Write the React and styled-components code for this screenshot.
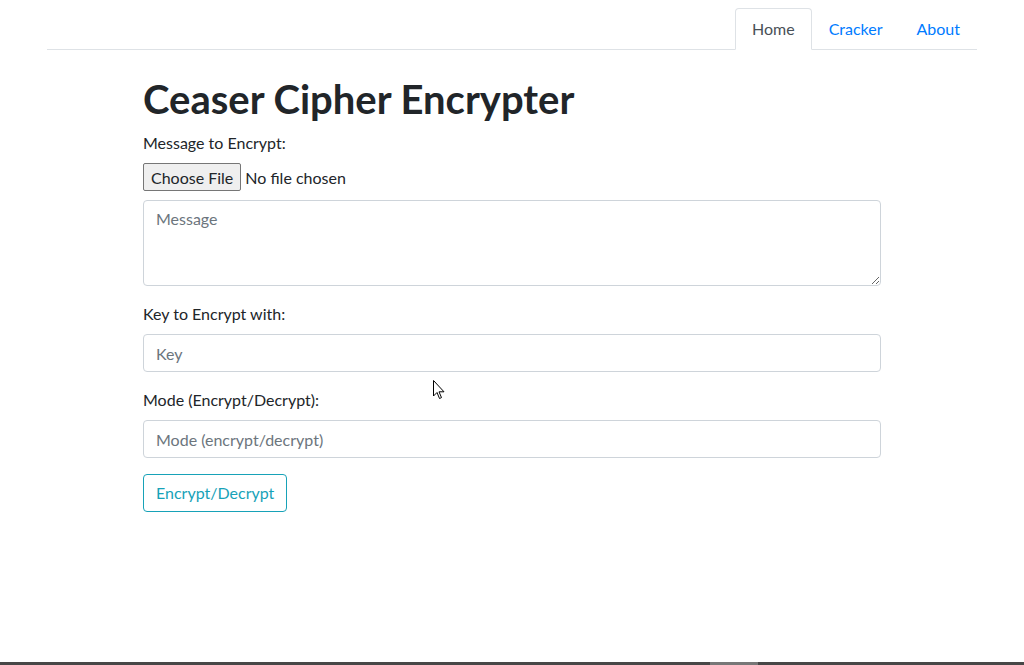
import { createGlobalStyle, styled } from 'styled-components'

const GlobalStyle = createGlobalStyle`
  html, body {
    margin: 0;
    padding: 0;
    background: #fff;
  }
  body {
    font-family: Lato, "Noto Sans", sans-serif;
    font-size: 16px;
    line-height: 1.5;
    color: #212529;
  }
  *, *::before, *::after {
    box-sizing: border-box;
  }
`

const Container = styled.div`
  width: 960px;
  margin: 0 auto;
  padding: 8px 15px 0;
`

const Tabs = styled.ul`
  display: flex;
  justify-content: flex-end;
  list-style: none;
  margin: 0;
  padding: 0;
  border-bottom: 1px solid #dee2e6;
`

const Tab = styled.li`
  margin-bottom: -1px;
`

const TabLink = styled.a`
  display: block;
  padding: 8px 16px;
  line-height: 24px;
  border: 1px solid ${(p) => (p.$active ? '#dee2e6' : 'transparent')};
  border-bottom-color: ${(p) => (p.$active ? '#fff' : 'transparent')};
  border-top-left-radius: 4px;
  border-top-right-radius: 4px;
  background: ${(p) => (p.$active ? '#fff' : 'transparent')};
  color: ${(p) => (p.$active ? '#495057' : '#007bff')};
  text-decoration: none;
`

const Main = styled.main`
  width: 768px;
  margin: 0 auto;
  padding: 25px 15px 0;
`

const Title = styled.h1`
  margin: 0 0 8px;
  font-size: 40px;
  font-weight: 700;
  line-height: 1.2;
`

const Group = styled.div`
  margin-bottom: 16px;
`

const Label = styled.label`
  display: block;
  margin-bottom: 8px;
`

const FileInput = styled.input`
  display: block;
  width: 100%;
  margin-bottom: 9px;
  font-family: inherit;
  font-size: 16px;
  color: #212529;
  &::file-selector-button {
    height: 28px;
    padding: 0 7px;
    margin-right: 4px;
    font-family: inherit;
    font-size: 16px;
    color: #212529;
    background: #efefef;
    border: 1px solid #767676;
    border-radius: 2px;
  }
`

const Field = styled.input`
  display: block;
  width: 100%;
  height: 38px;
  padding: 6px 12px;
  font-family: inherit;
  font-size: 16px;
  line-height: 24px;
  color: #495057;
  border: 1px solid #ced4da;
  border-radius: 4px;
  &::placeholder {
    color: #6c757d;
  }
`

const TextArea = styled.textarea`
  display: block;
  width: 100%;
  height: 86px;
  padding: 6px 12px;
  font-family: inherit;
  font-size: 16px;
  line-height: 24px;
  color: #495057;
  border: 1px solid #ced4da;
  border-radius: 4px;
  &::placeholder {
    color: #6c757d;
  }
`

const Button = styled.button`
  height: 38px;
  padding: 6px 12px;
  font-family: inherit;
  font-size: 16px;
  line-height: 24px;
  color: #17a2b8;
  background: transparent;
  border: 1px solid #17a2b8;
  border-radius: 4px;
`

const Pointer = styled.svg`
  position: absolute;
  left: 433px;
  top: 380px;
`

const BottomBar = styled.div`
  position: fixed;
  left: 0;
  right: 0;
  bottom: 0;
  height: 3px;
  background: #474747;
`

const BarThumb = styled.div`
  width: 48px;
  height: 3px;
  margin-left: 710px;
  background: #777;
`

const App = () => {
  return (
    <>
      <GlobalStyle />
      <Container>
        <Tabs>
          <Tab>
            <TabLink $active href="#">Home</TabLink>
          </Tab>
          <Tab>
            <TabLink href="#">Cracker</TabLink>
          </Tab>
          <Tab>
            <TabLink href="#">About</TabLink>
          </Tab>
        </Tabs>
      </Container>
      <Main>
        <Title>Ceaser Cipher Encrypter</Title>
        <Group>
          <Label>Message to Encrypt:</Label>
          <FileInput type="file" />
          <TextArea placeholder="Message" rows={3} />
        </Group>
        <Group>
          <Label>Key to Encrypt with:</Label>
          <Field placeholder="Key" />
        </Group>
        <Group>
          <Label>Mode (Encrypt/Decrypt):</Label>
          <Field placeholder="Mode (encrypt/decrypt)" />
        </Group>
        <Button>Encrypt/Decrypt</Button>
      </Main>
      <Pointer width="12" height="20" viewBox="0 0 12 20">
        <path d="M0.5 0.5 L0.5 16 L4 12.5 L6.5 18.5 L8.5 17.6 L6 11.8 L11 11.8 Z" fill="#fff" stroke="#000" strokeWidth="1" />
      </Pointer>
      <BottomBar>
        <BarThumb />
      </BottomBar>
    </>
  )
}

export default App
